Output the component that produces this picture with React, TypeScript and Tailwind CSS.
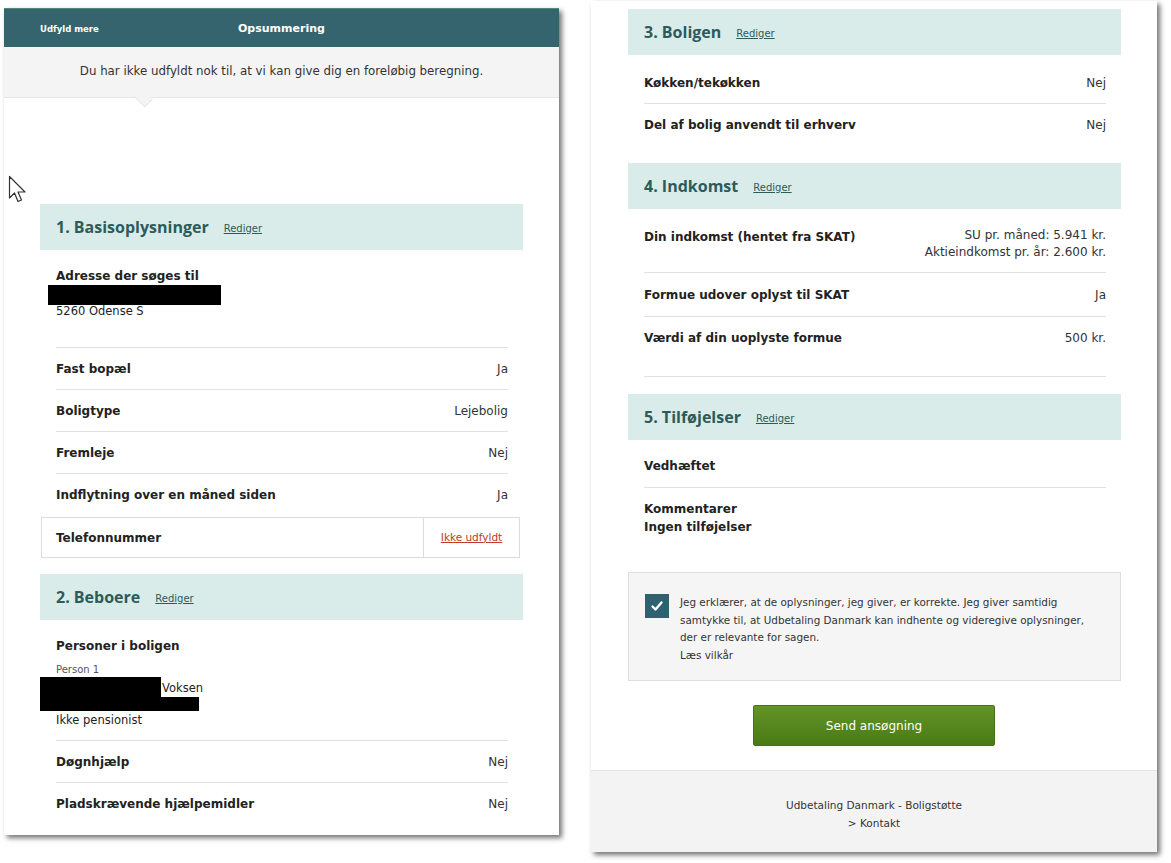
import React from "react";

const font = { fontFamily: '"DejaVu Sans", Verdana, sans-serif' };
const titleFont = { fontFamily: '"Open Sans", "DejaVu Sans", sans-serif' };

function SectionHeader({ title }: { title: string }) {
  return (
    <div className="h-[46px] bg-[#d9ecea] flex items-center pl-[16px]">
      <span style={titleFont} className="text-[16px] font-bold text-[#2d5b5a] leading-none">
        {title}
      </span>
      <span className="ml-[15px] text-[10px] text-[#2d5b5a] underline leading-none mt-[3px]">
        Rediger
      </span>
    </div>
  );
}

function Row({
  label,
  value,
  border = true,
}: {
  label: string;
  value: string;
  border?: boolean;
}) {
  return (
    <div
      className={`h-[42px] flex items-center justify-between ${
        border ? "border-b border-[#e2e2e2]" : ""
      }`}
    >
      <span className="text-[12px] font-bold text-[#222]">{label}</span>
      <span className="text-[12px] text-[#333]">{value}</span>
    </div>
  );
}

function Cursor() {
  return (
    <svg
      className="absolute left-[8px] top-[175px]"
      width="20"
      height="30"
      viewBox="0 0 20 30"
    >
      <path
        d="M1.5 1.5 L1.5 23 L6.5 18 L10 26.5 L13.5 25 L10 17 L17 17 Z"
        fill="#fff"
        stroke="#333"
        strokeWidth="1.2"
        strokeLinejoin="round"
      />
    </svg>
  );
}

export default function App() {
  return (
    <div style={font} className="relative w-[1171px] h-[863px] bg-white overflow-hidden text-[#222]">
      <Cursor />
      <div className="flex items-start pl-[4px] gap-[32px]">
        {/* LEFT PANEL */}
        <div className="mt-[8px] w-[555px] h-[827px] bg-white shadow-[3px_3px_5px_rgba(0,0,0,0.55)] flex flex-col">
          <div className="h-[39px] bg-[#35646e] border-t border-[#4f8a77] flex items-center pt-[3px]">
            <span className="ml-[36px] text-[8.5px] font-bold text-white w-[198px]">Udfyld mere</span>
            <span className="text-[11px] font-bold text-white">Opsummering</span>
          </div>
          <div className="relative h-[51px] bg-[#f4f4f4] border-b border-[#e6e6e6] flex items-center justify-center">
            <span className="text-[11.8px] text-[#333]">
              Du har ikke udfyldt nok til, at vi kan give dig en foreløbig beregning.
            </span>
            <div className="absolute left-[131px] -bottom-[9px] w-[16px] h-[16px] bg-[#f4f4f4] rotate-45 border-r border-b border-[#e6e6e6] scale-y-[0.7]" />
          </div>
          <div className="h-[106px]" />
          <div className="mx-[36px]">
            <SectionHeader title="1. Basisoplysninger" />
            <div className="px-[16px] pr-[15px]">
              <div className="pt-[17px] pb-[28px] border-b border-[#e2e2e2]">
                <div className="text-[12px] font-bold leading-[18px]">Adresse der søges til</div>
                <div className="-ml-[8px] w-[173px] h-[20px] bg-black" />
                <div className="text-[11.5px] leading-[16px] mt-[-2px]">5260 Odense S</div>
              </div>
              <Row label="Fast bopæl" value="Ja" />
              <Row label="Boligtype" value="Lejebolig" />
              <Row label="Fremleje" value="Nej" />
              <Row label="Indflytning over en måned siden" value="Ja" border={false} />
            </div>
            <div className="mt-[1px] mx-[1px] mr-[3px] h-[41px] border border-[#dcdcdc] flex">
              <div className="flex-1 flex items-center pl-[14px] text-[12px] font-bold border-r border-[#dcdcdc]">
                Telefonnummer
              </div>
              <div className="w-[95px] flex items-center justify-center text-[10.5px] text-[#c0392b] underline">
                Ikke udfyldt
              </div>
            </div>
            <div className="h-[16px]" />
            <SectionHeader title="2. Beboere" />
            <div className="px-[16px] pr-[15px]">
              <div className="pt-[17px] pb-[12px] border-b border-[#e2e2e2]">
                <div className="text-[12px] font-bold leading-[18px]">Personer i boligen</div>
                <div className="text-[10px] text-[#555] leading-[12px] mt-[9px]">Person 1</div>
                <div className="flex items-start mt-[1px]">
                  <div className="-ml-[16px] w-[121px] h-[20px] bg-black" />
                  <div className="text-[11.5px] leading-[16px] mt-[3px] ml-[1px]">Voksen</div>
                </div>
                <div className="-ml-[16px] w-[159px] h-[14px] bg-black" />
                <div className="text-[11.5px] leading-[16px] mt-[1px]">Ikke pensionist</div>
              </div>
              <Row label="Døgnhjælp" value="Nej" />
              <Row label="Pladskrævende hjælpemidler" value="Nej" border={false} />
            </div>
          </div>
        </div>

        {/* RIGHT PANEL */}
        <div className="mt-[1px] w-[566px] h-[851px] bg-white shadow-[3px_3px_5px_rgba(0,0,0,0.55)] flex flex-col">
          <div className="pl-[37px] pr-[36px] pt-[8px]">
            <SectionHeader title="3. Boligen" />
            <div className="px-[16px] pr-[15px] pt-[7px]">
              <div className="h-[42px] flex items-start pt-[12px] justify-between border-b border-[#e2e2e2]">
                <span className="text-[12px] font-bold">Køkken/tekøkken</span>
                <span className="text-[12px] text-[#333]">Nej</span>
              </div>
              <Row label="Del af bolig anvendt til erhverv" value="Nej" border={false} />
            </div>
            <div className="h-[17px]" />
            <SectionHeader title="4. Indkomst" />
            <div className="px-[16px] pr-[15px] pt-[5px]">
              <div className="pt-[14px] pb-[11px] flex justify-between items-start border-b border-[#e2e2e2]">
                <span className="text-[12px] font-bold leading-[18px]">Din indkomst (hentet fra SKAT)</span>
                <div className="text-right text-[12px] leading-[17px] text-[#333] mt-[-1px]">
                  <div>SU pr. måned: 5.941 kr.</div>
                  <div>Aktieindkomst pr. år: 2.600 kr.</div>
                </div>
              </div>
              <div className="h-[44px] flex items-center justify-between border-b border-[#e2e2e2]">
                <span className="text-[12px] font-bold">Formue udover oplyst til SKAT</span>
                <span className="text-[12px] text-[#333]">Ja</span>
              </div>
              <div className="h-[60px] border-b border-[#e2e2e2]">
                <div className="h-[42px] flex items-center justify-between">
                  <span className="text-[12px] font-bold">Værdi af din uoplyste formue</span>
                  <span className="text-[12px] text-[#333]">500 kr.</span>
                </div>
              </div>
            </div>
            <div className="h-[17px]" />
            <SectionHeader title="5. Tilføjelser" />
            <div className="px-[16px] pr-[15px] pt-[5px]">
              <div className="h-[43px] flex items-center border-b border-[#e2e2e2]">
                <span className="text-[12px] font-bold">Vedhæftet</span>
              </div>
              <div className="pt-[12px] text-[12px] font-bold leading-[18px]">
                <div>Kommentarer</div>
                <div>Ingen tilføjelser</div>
              </div>
            </div>
            <div className="mt-[36px] h-[109px] bg-[#f5f5f5] border border-[#dedede] flex items-start pt-[21px] pl-[16px]">
              <div className="w-[24px] h-[24px] bg-[#2f6170] flex items-center justify-center shrink-0">
                <svg width="14" height="14" viewBox="0 0 14 14">
                  <path d="M2.5 7.5 L5.5 10.5 L11.5 3.5" fill="none" stroke="#fff" strokeWidth="2.4" strokeLinecap="round" strokeLinejoin="round" />
                </svg>
              </div>
              <div className="ml-[11px] mt-[0px] text-[10.4px] leading-[17.5px] text-[#333] whitespace-nowrap">
                <div>Jeg erklærer, at de oplysninger, jeg giver, er korrekte. Jeg giver samtidig</div>
                <div>samtykke til, at Udbetaling Danmark kan indhente og videregive oplysninger,</div>
                <div>der er relevante for sagen.</div>
                <div>Læs vilkår</div>
              </div>
            </div>
          </div>
          <div className="flex justify-center mt-[24px]">
            <div className="w-[242px] h-[41px] rounded-[2px] bg-gradient-to-b from-[#629426] to-[#4a7a16] border border-[#46701a] flex items-center justify-center text-white text-[12px]">
              Send ansøgning
            </div>
          </div>
          <div className="mt-[24px] flex-1 bg-[#f3f3f3] border-t border-[#e4e4e4] flex flex-col items-center pt-[25px] text-[10.5px] leading-[18px] text-[#333]">
            <div>Udbetaling Danmark - Boligstøtte</div>
            <div>&gt; Kontakt</div>
          </div>
        </div>
      </div>
    </div>
  );
}
